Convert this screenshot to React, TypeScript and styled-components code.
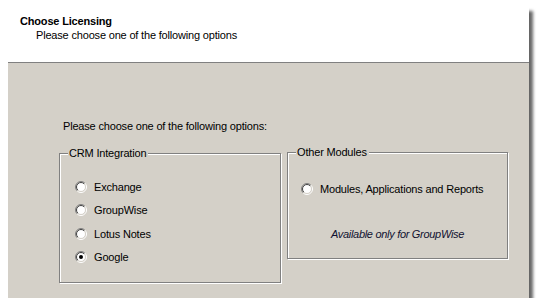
import { createGlobalStyle, styled } from 'styled-components';

const GlobalStyle = createGlobalStyle`
  html, body {
    margin: 0;
    padding: 0;
    background: #ffffff;
  }
  body {
    font-family: 'Liberation Sans', Arial, sans-serif;
    font-size: 11px;
    letter-spacing: -0.18px;
    color: #000;
  }
`;

// 전체 창
const Window = styled.div`
  width: 521px;
  height: 291px;
  margin: 7px 0 0 8px;
  background-color: #d4d0c8;
  box-shadow: 4px 4px 3px rgba(0, 0, 0, 0.6);
  display: flex;
  flex-direction: column;
`;

// 상단 흰색 헤더
const Header = styled.div`
  height: 56px;
  background-color: #ffffff;
  border-bottom: 1px solid #808080;
  padding: 7px 0 0 12px;
  box-sizing: border-box;
  flex-shrink: 0;
`;

const Title = styled.div`
  font-weight: bold;
  line-height: 14px;
`;

const Subtitle = styled.div`
  margin-left: 16px;
  line-height: 14px;
`;

const Body = styled.div`
  flex: 1;
  padding: 57px 0 0 51px;
  box-sizing: border-box;
`;

const Intro = styled.div`
  margin-left: 4px;
  line-height: 13px;
`;

const Groups = styled.div`
  display: flex;
  align-items: flex-start;
  gap: 6px;
  margin-top: 19px;
`;

const GroupBox = styled.div<{ $w: number; $h: number; $pt: number; $pl: number; $mt?: number }>`
  position: relative;
  width: ${(p) => p.$w}px;
  height: ${(p) => p.$h}px;
  margin-top: ${(p) => p.$mt ?? 0}px;
  box-sizing: border-box;
  border: 1px solid #808080;
  box-shadow: inset 1px 1px 0 #ffffff, 1px 1px 0 #ffffff;
  padding: ${(p) => p.$pt}px 0 0 ${(p) => p.$pl}px;
`;

const Legend = styled.span`
  position: absolute;
  top: -7px;
  left: 8px;
  padding: 0 2px 0 1px;
  background-color: #d4d0c8;
  line-height: 13px;
`;

const RadioRow = styled.div`
  height: 23.5px;
  display: flex;
  align-items: center;
  gap: 7px;
`;

const Note = styled.div`
  margin-top: 27px;
  margin-left: -13px;
  text-align: center;
  font-style: italic;
  color: #101030;
  letter-spacing: -0.3px;
`;

const Radio = ({ checked }: { checked?: boolean }) => (
  <svg width="12" height="12" viewBox="0 0 12 12">
    <defs>
      <linearGradient id="ro" x1="0" y1="0" x2="1" y2="1">
        <stop offset="0.45" stopColor="#808080" />
        <stop offset="0.55" stopColor="#ffffff" />
      </linearGradient>
      <linearGradient id="ri" x1="0" y1="0" x2="1" y2="1">
        <stop offset="0.45" stopColor="#404040" />
        <stop offset="0.55" stopColor="#d4d0c8" />
      </linearGradient>
    </defs>
    <circle cx="6" cy="6" r="5.5" fill="none" stroke="url(#ro)" />
    <circle cx="6" cy="6" r="4.5" fill="#ffffff" stroke="url(#ri)" />
    {checked && <circle cx="6" cy="6" r="2" fill="#000" />}
  </svg>
);

const crmOptions = ['Exchange', 'GroupWise', 'Lotus Notes', 'Google'];

export default function App() {
  return (
    <>
      <GlobalStyle />
      <Window>
        <Header>
          <Title>Choose Licensing</Title>
          <Subtitle>Please choose one of the following options</Subtitle>
        </Header>
        <Body>
          <Intro>Please choose one of the following options:</Intro>
          <Groups>
            <GroupBox $w={222} $h={130} $pt={21} $pl={15} $mt={1}>
              <Legend>CRM Integration</Legend>
              {crmOptions.map((o) => (
                <RadioRow key={o}>
                  <Radio checked={o === 'Google'} />
                  {o}
                </RadioRow>
              ))}
            </GroupBox>
            <GroupBox $w={221} $h={107} $pt={24} $pl={13}>
              <Legend>Other Modules</Legend>
              <RadioRow>
                <Radio />
                Modules, Applications and Reports
              </RadioRow>
              <Note>Available only for GroupWise</Note>
            </GroupBox>
          </Groups>
        </Body>
      </Window>
    </>
  );
}
